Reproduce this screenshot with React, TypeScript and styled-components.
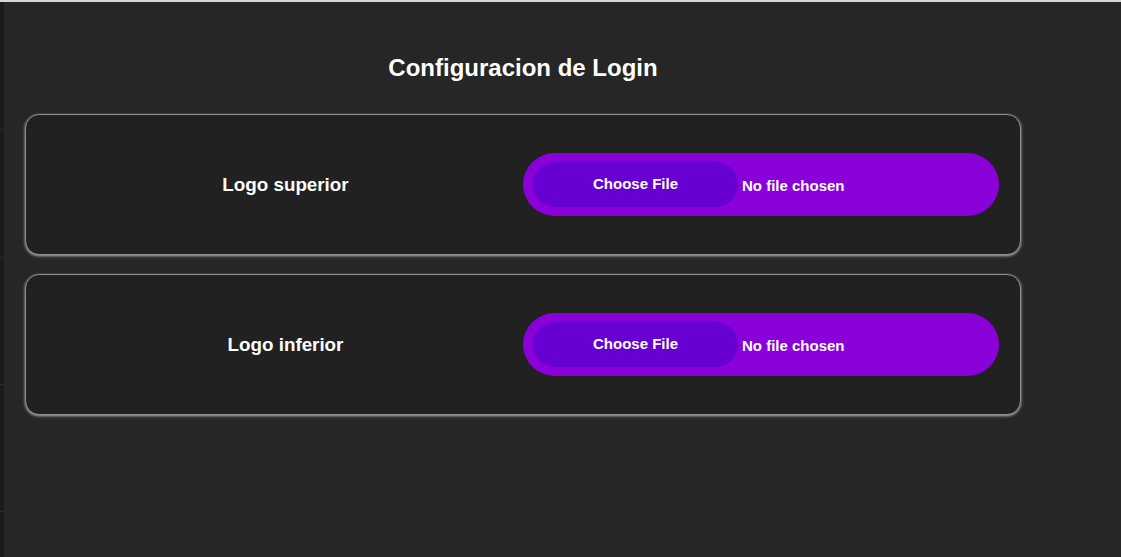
import React from 'react';
import styled, {createGlobalStyle} from 'styled-components';

const GlobalStyle = createGlobalStyle`
    html, body {
        margin: 0;
        padding: 0;
        height: 100%;
        background: #262626;
        font-family: "Liberation Sans", Arial, sans-serif;
    }
    #root {
        height: 100%;
    }
`;

const logos = [
    {id: 'superior', label: 'Logo superior'},
    {id: 'inferior', label: 'Logo inferior'},
];

const Screen = styled.div`
    height: 100vh;
    display: flex;
    flex-direction: column;
    border-top: 2px solid #d6d6d6;
    box-sizing: border-box;
    overflow: hidden;
`;

const Body = styled.div`
    flex: 1;
    display: flex;
`;

const SideStrip = styled.div`
    width: 4px;
    display: flex;
    flex-direction: column;
    background: #1b1b1b;
`;

const StripSegment = styled.div<{ $h: number }>`
    height: ${p => p.$h}px;
    border-bottom: 1px solid #2b2b2b;
    box-sizing: border-box;
`;

const Content = styled.main`
    flex: 1;
    padding: 0 0 0 21px;
`;

const Title = styled.h1`
    width: 996px;
    margin: 0 0 32px;
    padding-top: 52px;
    line-height: 28px;
    font-size: 24px;
    font-weight: bold;
    color: #ffffff;
    text-align: center;
`;

const CardList = styled.div`
    display: flex;
    flex-direction: column;
    gap: 19px;
`;

const Card = styled.section`
    width: 996px;
    height: 141px;
    box-sizing: border-box;
    display: grid;
    grid-template-columns: 497px 476px;
    align-items: center;
    background: #212121;
    border: 1px solid #8e8e8e;
    border-radius: 14px;
    box-shadow: 0 1px 3px rgba(225, 225, 225, 0.75);
`;

const Label = styled.label`
    padding-left: 22px;
    text-align: center;
    font-size: 18.8px;
    font-weight: bold;
    color: #ffffff;
`;

const FilePill = styled.label`
    height: 63px;
    box-sizing: border-box;
    padding: 0 10px;
    display: flex;
    align-items: center;
    gap: 4px;
    background: #8a00d9;
    border-radius: 32px;
    cursor: pointer;

    input {
        display: none;
    }
`;

const ChooseButton = styled.span`
    width: 205px;
    height: 45px;
    display: flex;
    align-items: center;
    justify-content: center;
    padding-bottom: 2px;
    box-sizing: border-box;
    background: #6700d3;
    border-radius: 23px;
    font-size: 15px;
    font-weight: bold;
    color: #ffffff;
`;

const FileName = styled.span`
    font-size: 15px;
    font-weight: bold;
    color: #ffffff;
    padding-top: 2px;
`;

export default function App() {
    return (
        <>
            <GlobalStyle/>
            <Screen>
                <Body>
                    <SideStrip>
                        {[128, 128, 127, 127, 127].map((h, i) => <StripSegment key={i} $h={h}/>)}
                    </SideStrip>
                    <Content>
                        <Title>Configuracion de Login</Title>
                        <CardList>
                            {logos.map(logo => (
                                <Card key={logo.id}>
                                    <Label htmlFor={`logo-${logo.id}`}>{logo.label}</Label>
                                    <FilePill>
                                        <input id={`logo-${logo.id}`} type="file" accept="image/*"/>
                                        <ChooseButton>Choose File</ChooseButton>
                                        <FileName>No file chosen</FileName>
                                    </FilePill>
                                </Card>
                            ))}
                        </CardList>
                    </Content>
                </Body>
            </Screen>
        </>
    );
}
